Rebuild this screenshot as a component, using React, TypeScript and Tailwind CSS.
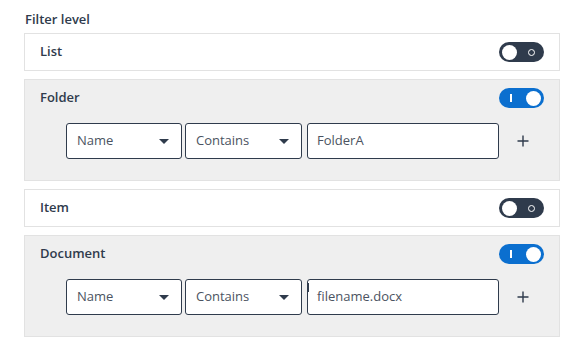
import React from 'react';

type Level = {
  label: string;
  enabled: boolean;
  value?: string;
  cursor?: boolean;
};

const levels: Level[] = [
  { label: 'List', enabled: false },
  { label: 'Folder', enabled: true, value: 'FolderA' },
  { label: 'Item', enabled: false },
  { label: 'Document', enabled: true, value: 'filename.docx', cursor: true },
];

const Toggle = ({ on }: { on: boolean }) => {
  if (on) {
    return (
      <div className="w-[45px] h-[20px] rounded-full bg-[#0b6fcf] flex items-center justify-between pl-[11px] pr-[3px]">
        <span className="w-[2px] h-[8px] bg-white" />
        <span className="w-[15px] h-[15px] rounded-full bg-white" />
      </div>
    );
  }
  return (
    <div className="w-[45px] h-[20px] rounded-full bg-[#2f3b4c] flex items-center justify-between pl-[3px] pr-[9px]">
      <span className="w-[15px] h-[15px] rounded-full bg-white" />
      <span className="w-[7px] h-[7px] rounded-full border-[1.5px] border-white" />
    </div>
  );
};

const Select = ({ text, width }: { text: string; width: string }) => (
  <div
    className={`${width} h-[36px] rounded-[3px] border border-[#2f3b4c] bg-white flex items-center justify-between pl-[10px] pr-[12px] text-[13px] text-[#4b5361]`}
  >
    <span>{text}</span>
    <span className="w-0 h-0 border-l-[5px] border-r-[5px] border-t-[5px] border-l-transparent border-r-transparent border-t-[#2f3b4c]" />
  </div>
);

const FilterRow = ({ value, cursor }: { value: string; cursor?: boolean }) => (
  <div className="flex items-center pl-[26px] mt-[15px] mb-[13px]">
    <Select text="Name" width="w-[116px]" />
    <div className="w-[3px]" />
    <Select text="Contains" width="w-[117px]" />
    <div className="w-[5px]" />
    <div className="relative w-[192px] h-[36px] rounded-[3px] border border-[#2f3b4c] bg-white flex items-center pl-[9px] text-[13px] text-[#4b5361]">
      {cursor && <span className="absolute left-[-1px] top-[3px] w-[2px] h-[9px] bg-[#2f3b4c]" />}
      {value}
    </div>
    <svg className="ml-[18px]" width="12" height="12" viewBox="0 0 12 12">
      <path d="M6 0.5v11M0.5 6h11" stroke="#2f3b4c" strokeWidth="1.4" />
    </svg>
  </div>
);

export default function App() {
  return (
    <div
      className="w-[582px] h-[341px] bg-white pt-[8px] pl-[24px] pr-[22px]"
      style={{ fontFamily: '"Open Sans", "Liberation Sans", sans-serif' }}
    >
      <div className="pl-[1px] h-[22px] text-[13px] font-semibold text-[#2f3b4c] leading-[22px]">Filter level</div>
      <div className="mt-[3px] flex flex-col gap-[8px]">
        {levels.map((l) => (
          <div
            key={l.label}
            className={`border border-[#e2e2e2] px-[15px] pt-[8px] pb-[8px] ${l.enabled ? 'bg-[#efefef]' : 'bg-white'}`}
          >
            <div className="flex items-center justify-between h-[20px]">
              <span className="text-[13px] font-semibold text-[#2f3b4c]">{l.label}</span>
              <Toggle on={l.enabled} />
            </div>
            {l.enabled && l.value && <FilterRow value={l.value} cursor={l.cursor} />}
          </div>
        ))}
      </div>
    </div>
  );
}
